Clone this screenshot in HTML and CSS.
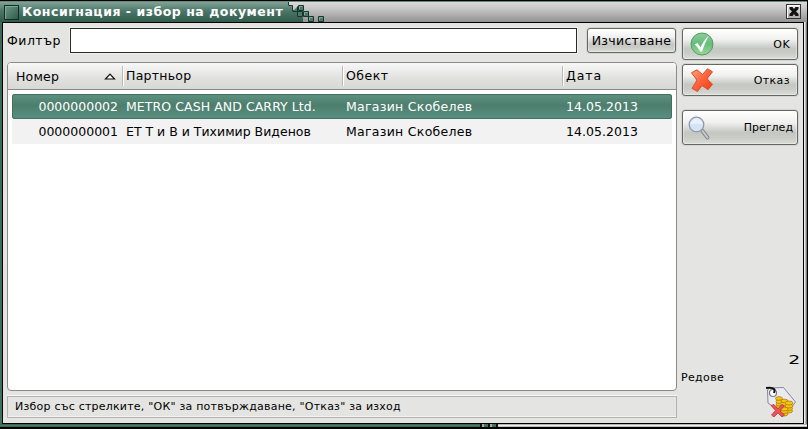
FILE: index.html
```
<!DOCTYPE html>
<html lang="bg">
<head>
<meta charset="utf-8">
<title>Консигнация - избор на документ</title>
<link rel="stylesheet" href="styles.css">
</head>
<body>
<div class="window">
  <header class="titlebar">
    <div class="caption">
      <span class="menu-box"></span>
      <h1>Консигнация - избор на документ</h1>
    </div>
    <svg class="steps" width="42" height="20" viewBox="0 0 42 20">
      <defs><linearGradient id="sg" x1="0" y1="0" x2="0" y2="20" gradientUnits="userSpaceOnUse"><stop offset="0" stop-color="#82a296"/><stop offset=".45" stop-color="#4b7768"/><stop offset="1" stop-color="#315b4c"/></linearGradient></defs>
      <path d="M0 0h1v4h5v5h5v6h5v5H0z" fill="url(#sg)"/>
      <path d="M1.500 0v3.500h4v5h5" fill="none" stroke="#183b30"/>
      <g fill="#4c7869" stroke="#17372d"><path d="M5.500 9.500h5v-5M11.500 3.500h5v5h-5zM10.500 9.500h5v5h-5zM16.500 9.500h5v5h-5zM21.500 14.500h5v5h-5zM31.500 14.500h5v5h-5z"/></g>
      <path d="M12.500 7V4.500h3M17.500 13v-2.500h3M22.500 18v-2.500h3M32.500 18v-2.500h3" fill="none" stroke="#84a99a"/>
    </svg>
    <button class="close" aria-label="Затвори"><svg width="10" height="9" viewBox="0 0 10 9"><path d="M.500 0h3L5 2 6.500 0h3v2L7 4.500 9.500 7v2h-3L5 7 3.500 9h-3V7L3 4.500.500 2z" fill="#111"/></svg></button>
  </header>
  <main class="content">
    <section class="left">
      <div class="filter">
        <label for="filter">Филтър</label>
        <input id="filter" type="text">
        <button class="btn clear"><span>Изчистване</span></button>
      </div>
      <div class="list">
        <div class="row head">
          <div class="c1"><span class="t-num">Номер</span><svg width="12" height="7" viewBox="0 0 12 7"><path d="M1.500 6L6 1.200 10.500 6z" fill="#fff" stroke="#111" stroke-width="1.200"/></svg></div>
          <div class="sep"><span class="t-par">Партньор</span></div>
          <div class="sep"><span class="t-obj">Обект</span></div>
          <div class="sep"><span class="t-date">Дата</span></div>
        </div>
        <div class="rows">
          <div class="row item selected">
            <div class="num">0000000002</div><div class="p1">METRO CASH AND CARRY Ltd.</div><div class="obj">Магазин Скобелев</div><div class="date">14.05.2013</div>
          </div>
          <div class="row item">
            <div class="num">0000000001</div><div class="p2">ЕТ Т и В и Тихимир Виденов</div><div class="obj">Магазин Скобелев</div><div class="date">14.05.2013</div>
          </div>
        </div>
      </div>
      <div class="status"><span>Избор със стрелките, "ОК" за потвърждаване, "Отказ" за изход</span></div>
    </section>
    <aside class="right">
      <button class="btn action ok">
        <svg width="24" height="24" viewBox="0 0 24 24"><defs><linearGradient id="g" x1="0" y1="0" x2="0" y2="1"><stop offset="0" stop-color="#8dcc9b"/><stop offset=".5" stop-color="#65bd7b"/><stop offset="1" stop-color="#9bd896"/></linearGradient></defs><circle cx="12" cy="12" r="11" fill="url(#g)" stroke="#559c67"/><path d="M4.500 12.500l3-1.500 3 4.500C12.500 11 15 7 18.800 3.500c-2.500 5-5 10-6.600 16h-2C8.800 17 7 14.500 4.500 12.500z" fill="#fff"/></svg>
        <span>OK</span>
      </button>
      <button class="btn action cancel">
        <svg width="24" height="24" viewBox="0 0 24 24"><defs><linearGradient id="r" x1="0" y1="0" x2="1" y2="1"><stop offset="0" stop-color="#ffa47a"/><stop offset=".5" stop-color="#fb623a"/><stop offset="1" stop-color="#f33b0d"/></linearGradient></defs><path d="M1.500 4.800l5.500-3 5.500 4.700L17.500.800l5 3L18 9.500q-1 1.500 0 2.500l4.500 4.200-4.500 5.500-6-4.200-4.500 6-5.500-3.200L6 14q1-1.500.2-3z" fill="url(#r)" stroke="#d84d2e" stroke-linejoin="round"/></svg>
        <span>Отказ</span>
      </button>
      <button class="btn action view">
        <svg width="24" height="24" viewBox="0 0 24 24"><path d="M14.500 15l5 6.500" stroke="#85888c" stroke-width="3.800" stroke-linecap="round"/><path d="M14.500 15l5 6.500" stroke="#c8cacd" stroke-width="2" stroke-linecap="round"/><circle cx="8.500" cy="8.500" r="7.300" fill="#d3e4f6" stroke="#9599a6" stroke-width="1.300"/><path d="M2.500 8.500a6 6 0 0 1 12 0q-6-2-12 0" fill="#e9f2fb"/></svg>
        <span>Преглед</span>
      </button>
      <div class="count"><span>2</span></div>
      <div class="rows-label"><span>Редове</span></div>
      <svg class="tag" width="31" height="31" viewBox="0 0 31 31">
        <path d="M1.500 4l2-2 14-.500L29.500 16l-10 13L2 17z" fill="#e9ebf1" stroke="#858895"/>
        <circle cx="7" cy="7" r="3.500" fill="#fff" stroke="#747782" stroke-width="1.200"/>
        <path d="M0 2q6-1 8 1 1 1 0 4" fill="none" stroke="#111" stroke-width="2"/>
        <g fill="#f5c414" stroke="#b17b09" stroke-width=".8"><ellipse cx="14" cy="20.500" rx="4" ry="2"/><ellipse cx="14" cy="18" rx="4" ry="2"/><ellipse cx="13.500" cy="15.500" rx="3.500" ry="2"/><ellipse cx="13" cy="12.500" rx="3.500" ry="1.800"/><ellipse cx="18" cy="20" rx="4" ry="2"/><ellipse cx="18.500" cy="17.500" rx="4" ry="2"/><ellipse cx="18.500" cy="15" rx="3.500" ry="1.800"/><ellipse cx="22.500" cy="25" rx="4" ry="2"/><ellipse cx="22.500" cy="22.500" rx="4" ry="2"/><ellipse cx="23" cy="20" rx="4" ry="2"/><ellipse cx="23" cy="17" rx="4" ry="2"/><ellipse cx="18" cy="28" rx="4" ry="2"/><ellipse cx="18" cy="25.500" rx="4" ry="2"/><ellipse cx="18" cy="23" rx="4" ry="2"/></g>
        <path d="M5 19.500l3-1 4 4.500 4-4.500 2.200 1.500-4.200 5 4.500 4-2.500 2-4-4-4 4-2.500-2 4-4.500z" fill="#ea5458" stroke="#b9363a" stroke-width=".8"/>
      </svg>
    </aside>
  </main>
  <footer class="frame-bottom"><i class="green"></i><i class="dots"></i></footer>
</div>
</body>
</html>
```
FILE: styles.css
```
* { box-sizing: border-box; }
html, body { margin: 0; height: 100%; overflow: hidden; }
body { background: #000; font: 12.5px "DejaVu Sans", sans-serif; color: #000; }
button { font: inherit; color: inherit; padding: 0; }
.window { width: 807px; height: 427px; padding-top: 1px; display: grid; grid-template-rows: 21px 402px 3px; background: linear-gradient(#87a99c, #3a6756 25px, #41705f); }
.titlebar { display: flex; align-items: flex-start; border-top: 1px solid #65897c; background: linear-gradient(#dadada, #c9c9c9 30%, #929292); box-shadow: 0 -1px #000; height: 21px; }
.caption { width: 287px; height: 20px; display: flex; align-items: center; padding-left: 4px; background: linear-gradient(#82a296, #4b7768 45%, #315b4c); }
.menu-box { width: 15px; height: 15px; flex: none; border: 1px solid #102c23; background: linear-gradient(135deg, #6e9989, #2f5c4c); box-shadow: inset 1px 1px #80a898; }
h1 { margin: 0 0 0 3px; font-size: 12.5px; line-height: 20px; font-weight: bold; color: #fff; white-space: nowrap; letter-spacing: .52px; }
.steps { display: block; flex: none; }
.close { width: 15px; height: 15px; margin: 2px 6px 0 auto; border: 1px solid #333; background: linear-gradient(#eee, #aaa); box-shadow: inset 1px 1px #fff; display: grid; place-items: center; }
.content { width: 802px; margin-left: 2px; border: 1px solid #000; box-shadow: 1px 0 #eee, 2px 0 #bbb, 3px 0 #777; background: #e4e4e2; display: flex; gap: 5px; padding: 4px; }
.left { width: 670px; display: flex; flex-direction: column; }
.filter { display: flex; align-items: center; height: 26px; flex: none; padding-top: 1px; }
.filter label { width: 63px; letter-spacing: .5px; }
.filter input { width: 507px; height: 25px; border: 1px solid #292929; background: #fff; padding: 0; box-shadow: 0 0 0 1px #f0f0ee; outline: 0; }
.btn { border: 1px solid #656763; border-radius: 3px; background: linear-gradient(#fff, #f0f1ef 35%, #c5c7c3 65%, #c9cbc7 80%, #dadcd8); box-shadow: inset 0 0 0 1px #ffffff60, 0 0 0 1px #d5d5d2; }
.clear { width: 89px; height: 25px; margin-left: auto; margin-right: 1px; letter-spacing: .3px; }
.list { height: 329px; flex: none; margin-top: 9px; border: 1px solid #8b8b86; border-radius: 4px; background: #fff; overflow: hidden; }
.row { display: grid; grid-template-columns: 114px 220px 220px 1fr; align-items: center; white-space: nowrap; }
.head { height: 27px; border-bottom: 1px solid #8b8b86; background: linear-gradient(#f8f8f8, #e0e0df 60%, #d8d8d6); }
.c1 { display: flex; align-items: center; justify-content: space-between; padding: 0 6px 0 8px; }
.t-num { letter-spacing: .2px; }
.t-par { letter-spacing: .25px; }
.t-obj { letter-spacing: .5px; }
.t-date { letter-spacing: .9px; }
.sep { height: 20px; line-height: 20px; border-left: 1px solid #b9b9b6; box-shadow: inset 1px 0 #fff; padding-left: 3px; }
.rows { padding: 4px; }
.item { height: 25px; background: #f2f2f2; }
.num { text-align: right; padding-right: 8px; }
.p1 { letter-spacing: .07px; }
.obj { letter-spacing: .28px; }
.date { letter-spacing: .05px; }
.selected { color: #fff; border-radius: 3px; background: linear-gradient(#5e9280, #4d7e6d 45%, #599080); box-shadow: inset 0 0 0 1px #40705e; }
.status { height: 22px; flex: none; margin-top: 5px; border: 1px solid #b2b2b0; box-shadow: 0 -1px #f8f8f8, inset 0 -1px #f3f3f2; line-height: 20px; padding-left: 7px; font-size: 11px; letter-spacing: .22px; white-space: nowrap; }
.right { width: 116px; display: flex; flex-direction: column; padding-top: 1px; font-size: 11px; }
.action { height: 32px; display: flex; align-items: center; justify-content: space-between; padding: 0 7px; flex: none; }
.ok, .cancel { letter-spacing: .4px; }
.cancel { margin-top: 4px; }
.view { height: 35px; margin-top: 14px; padding: 0 4px 0 5px; }
.count { height: 18px; margin-top: 206px; line-height: 18px; text-align: right; font-size: 13px; }
.count span { display: inline-block; transform: scaleX(1.45); }
.rows-label { height: 18px; line-height: 18px; margin-left: -1px; letter-spacing: .35px; }
.tag { margin: -1px 1px 0 auto; flex: none; }
.frame-bottom { display: flex; background: linear-gradient(#999, #eee, #aaa); }
.green { width: 480px; background: linear-gradient(#31594a, #4b7d6b, #31594a); }
.dots { width: 18px; background: repeating-linear-gradient(90deg, #111 0 2px, #aaa 2px 4px, #41705f 4px 8px); }
```
